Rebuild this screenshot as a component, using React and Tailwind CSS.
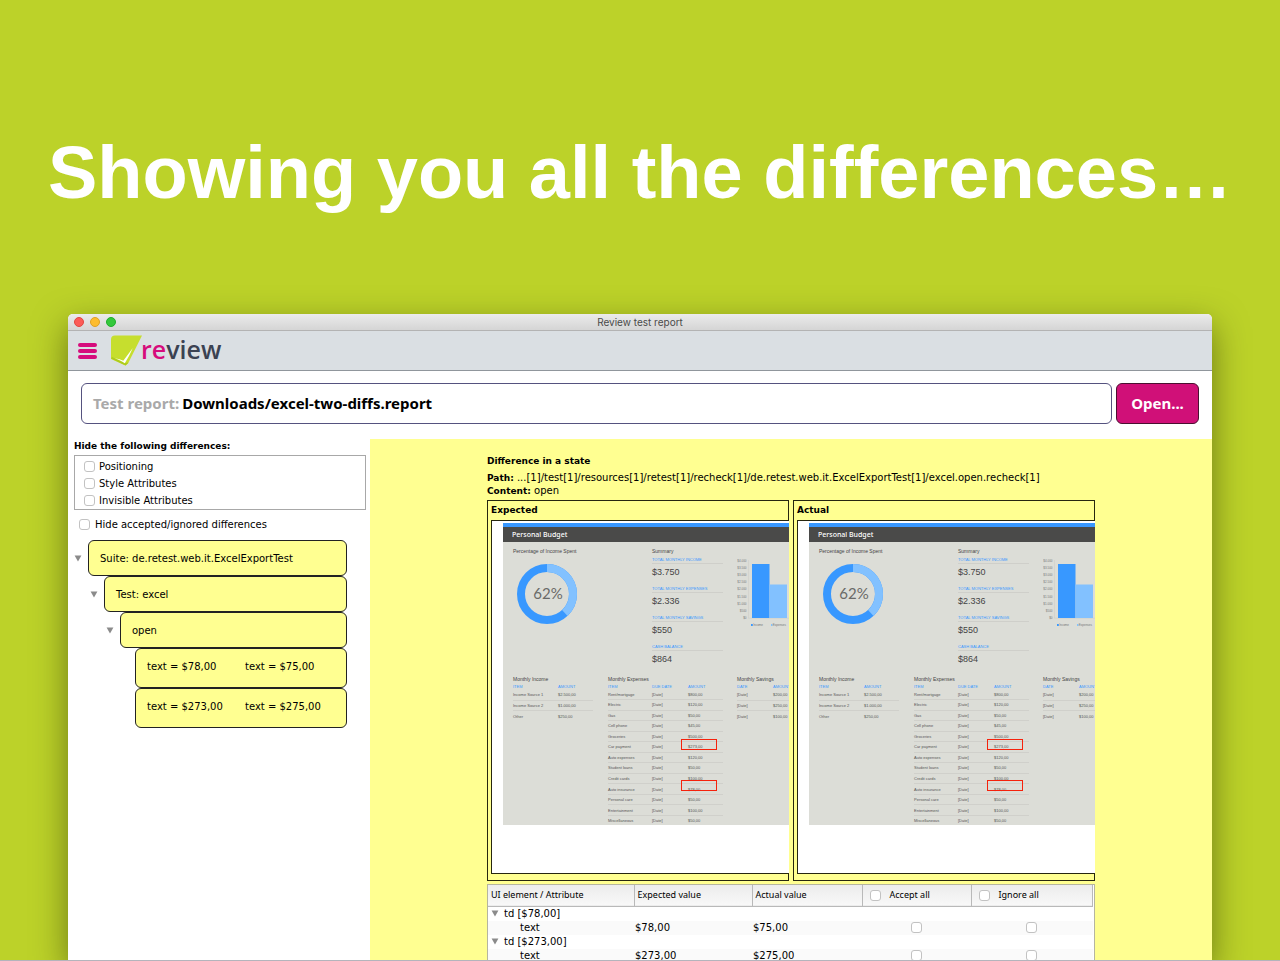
import React from 'react';

const UI = "font-['DejaVu_Sans',sans-serif]";

const expenses = [
  ['Rent/mortgage', '$800,00'],
  ['Electric', '$120,00'],
  ['Gas', '$50,00'],
  ['Cell phone', '$45,00'],
  ['Groceries', '$500,00'],
  ['Car payment', '$273,00'],
  ['Auto expenses', '$120,00'],
  ['Student loans', '$50,00'],
  ['Credit cards', '$100,00'],
  ['Auto insurance', '$78,00'],
  ['Personal care', '$50,00'],
  ['Entertainment', '$100,00'],
  ['Miscellaneous', '$50,00'],
];

const summary = [
  ['TOTAL MONTHLY INCOME', '$3.750'],
  ['TOTAL MONTHLY EXPENSES', '$2.336'],
  ['TOTAL MONTHLY SAVINGS', '$550'],
  ['CASH BALANCE', '$864'],
];

function CheckBox({ label, id }) {
  return (
    <input
      type="checkbox"
      id={id}
      aria-label={label}
      className="block size-[11px] shrink-0 appearance-none rounded-[3px] border border-[#c2c2c2] bg-white checked:bg-[#3b99fc]"
    />
  );
}

function Triangle() {
  return (
    <svg width="8" height="7" viewBox="0 0 8 7" className="shrink-0" aria-hidden="true">
      <path d="M0.6 0.5h6.8L4 6.6z" fill="#8b8b8b" />
    </svg>
  );
}

function Logo() {
  return (
    <span className="flex items-start" role="img" aria-label="review">
      <svg width="31" height="32" viewBox="0 0 31 32" aria-hidden="true">
        <path d="M4 0.500h27L17 28.500 14.500 30.500 0 24V4.500Q0 0.500 4 0.500z" fill="#c6de2e" />
        <path d="M0 23.500 14.500 30.500 17.500 27.500 14 28 1 22z" fill="#aecb1e" />
        <path d="M3.500 23.500c3.800 0.300 6.500 1 8.800 2.300L21.800 13c-2.500 5.500-5 10.500-8 15.200-3-2.200-6-3.700-10.300-4.700z" fill="#fff" />
      </svg>
      <span className="-ml-px font-['Open_Sans',sans-serif] text-[25px] leading-[28px] font-semibold text-[#3b4252]">
        <span className="text-[#d60c7c]">re</span>view
      </span>
    </span>
  );
}

function Donut() {
  return (
    <svg width="60" height="60" viewBox="0 0 60 60" aria-hidden="true">
      <circle cx="30" cy="30" r="26" fill="none" stroke="#3898ff" strokeWidth="8" />
      <circle cx="30" cy="30" r="26" fill="none" stroke="#82c1ff" strokeWidth="8" pathLength="100" strokeDasharray="38 62" transform="rotate(-90 30 30)" />
      <text x="31" y="34.500" textAnchor="middle" fontSize="15" fontFamily="Lato, sans-serif" fill="#6a6a68">62%</text>
    </svg>
  );
}

function BarChart() {
  const ticks = ['$4.000', '$3.500', '$3.000', '$2.500', '$2.000', '$1.500', '$1.000', '$500', '$0'];
  return (
    <svg width="52" height="72" viewBox="0 0 52 72" fontFamily="Liberation Sans, sans-serif" fontSize="3" aria-hidden="true">
      {ticks.map((t, i) => (
        <text key={t} x="9.500" y={4.500 + i * 7.200} textAnchor="end" fill="#777">{t}</text>
      ))}
      <path d="M11.500 3v58M11 61.200h41" stroke="#cfcfca" strokeWidth="0.600" />
      <rect x="15" y="7" width="17.500" height="54" fill="#3898ff" />
      <rect x="32.500" y="27.500" width="17.500" height="33.500" fill="#82c1ff" />
      <rect x="14" y="67" width="1.800" height="2" fill="#3898ff" />
      <text x="16.200" y="69" fill="#777">Income</text>
      <rect x="34" y="67" width="1.500" height="2" fill="#82c1ff" />
      <text x="35.800" y="69" fill="#777">Expenses</text>
    </svg>
  );
}

function MiniTable({ title, heads, rows, cols, tall }) {
  return (
    <div>
      <div className="h-[9px] font-['Liberation_Sans',sans-serif] text-[5px] leading-[9px] whitespace-nowrap text-[#444]">{title}</div>
      <table className={`table-fixed border-collapse font-['Liberation_Sans',sans-serif] text-[4px] leading-[5px] text-[#555] ${tall}`}>
        <thead className="text-[#3898ff]">
          <tr>
            {heads.map((h, i) => (
              <th key={h} className={`h-[6px] p-0 text-left align-top font-normal ${cols[i]}`}>{h}</th>
            ))}
          </tr>
        </thead>
        <tbody>
          {rows.map((r) => (
            <tr key={r.join()} className="border-b border-[#d0d0cb] last:border-0">
              {r.map((c, i) => (
                <td key={i} className="p-0 whitespace-nowrap">{c}</td>
              ))}
            </tr>
          ))}
        </tbody>
      </table>
    </div>
  );
}

function BudgetSheet() {
  return (
    <div className="relative ml-[11px] mt-[2px] overflow-hidden bg-[#dcddd7]">
      <div className="h-[4px] bg-[#3898ff]" />
      <div className="h-[15px] bg-[#4a4a49] pl-[9px] font-['Noto_Sans',sans-serif] text-[7px] leading-[15px] font-medium text-white">Personal Budget</div>
      <div className="flex pt-[5px] pl-[10px]">
        <div className="w-[139px] shrink-0">
          <div className="h-[9px] font-['Liberation_Sans',sans-serif] text-[5px] leading-[9px] text-[#444]">Percentage of Income Spent</div>
          <div className="pt-[8px] pl-[4px]"><Donut /></div>
        </div>
        <div className="w-[85px] shrink-0 pr-[14px]">
          <div className="h-[9px] font-['Liberation_Sans',sans-serif] text-[5px] leading-[9px] text-[#444]">Summary</div>
          {summary.map(([k, v]) => (
            <div key={k} className="h-[29px]">
              <div className="h-[8px] border-b border-[#cfcfca] font-['Liberation_Sans',sans-serif] text-[4px] leading-[7px] whitespace-nowrap text-[#3898ff]">{k}</div>
              <div className="font-['Liberation_Sans',sans-serif] text-[9px] leading-[17px] text-[#444]">{v}</div>
            </div>
          ))}
        </div>
        <div className="w-[52px] shrink-0 pt-[10px]"><BarChart /></div>
      </div>
      <div className="flex items-start pt-[3px] pl-[10px]">
        <div className="w-[95px] shrink-0">
          <MiniTable
            title="Monthly Income"
            heads={['ITEM', 'AMOUNT']}
            cols={['w-[45px]', 'w-[35px]']}
            tall="h-[37px]"
            rows={[['Income Source 1', '$2.500,00'], ['Income Source 2', '$1.000,00'], ['Other', '$250,00']]}
          />
        </div>
        <div className="w-[129px] shrink-0">
          <MiniTable
            title="Monthly Expenses"
            heads={['ITEM', 'DUE DATE', 'AMOUNT']}
            cols={['w-[44px]', 'w-[36px]', 'w-[35px]']}
            tall="h-[141px]"
            rows={expenses.map(([n, a]) => [n, '[Date]', a])}
          />
        </div>
        <div className="w-[80px] shrink-0">
          <MiniTable
            title="Monthly Savings"
            heads={['DATE', 'AMOUNT']}
            cols={['w-[36px]', 'w-[35px]']}
            tall="h-[37px]"
            rows={[['[Date]', '$200,00'], ['[Date]', '$250,00'], ['[Date]', '$100,00']]}
          />
        </div>
      </div>
      <div className="absolute top-[216px] left-[178px] h-[11px] w-[36px] border border-[#f5220c]" />
      <div className="absolute top-[257px] left-[178px] h-[11px] w-[36px] border border-[#f5220c]" />
    </div>
  );
}

function Shot({ title }) {
  return (
    <section className="min-w-0 border-y border-l border-[#26260f] pl-[3px]">
      <h3 className="h-[19px] border-r border-[#26260f] text-[9px] leading-[18px] font-bold">{title}</h3>
      <div className="h-[354px] overflow-hidden border-y border-l border-[#26260f] bg-white"><BudgetSheet /></div>
      <div className="h-[6px] border-r border-[#26260f]" />
    </section>
  );
}

function TreeNode({ indent, children, leaf }) {
  return (
    <li className={`flex items-center ${indent}`}>
      {!leaf && <button type="button" aria-label="Collapse" className="mr-[6px] block"><Triangle /></button>}
      <div className={`flex flex-1 items-center rounded-[6px] border border-[#222] bg-[#ffff91] pl-[11px] text-[10px] whitespace-nowrap ${leaf ? 'h-[40px] pb-[4px]' : 'h-[36px]'}`}>{children}</div>
    </li>
  );
}

function DiffTable() {
  const groups = [
    ['td [$78,00]', '$78,00', '$75,00'],
    ['td [$273,00]', '$273,00', '$275,00'],
  ];
  const head = 'border-r border-[#b9b9b9] p-0 pl-[3px] text-left font-normal';
  return (
    <div className="mt-[3px] overflow-hidden border border-[#b5b5a0] bg-white pr-px">
      <table className="w-full table-fixed border-collapse text-[10px] leading-[14px]">
        <thead>
          <tr className="h-[21px] border-b border-[#b9b9b9] bg-gradient-to-b from-[#ececec] to-[#f8f8f8] font-['Noto_Sans',sans-serif] text-[9px]">
            <th className={`w-[146px] ${head}`}>UI element / Attribute</th>
            <th className={`w-[118px] ${head}`}>Expected value</th>
            <th className={`w-[110px] ${head}`}>Actual value</th>
            <th className={`w-[109px] ${head}`}><label className="flex items-center gap-[9px] pl-[4px]"><CheckBox label="Accept all" />Accept all</label></th>
            <th className={head}><label className="flex items-center gap-[9px] pl-[4px]"><CheckBox label="Ignore all" />Ignore all</label></th>
          </tr>
        </thead>
        <tbody>
          {groups.map(([name, a, b]) => (
            <React.Fragment key={name}>
              <tr className="h-[14px]">
                <td colSpan="5" className="p-0 pl-[3px]">
                  <span className="flex items-center gap-[5px]"><Triangle />{name}</span>
                </td>
              </tr>
              <tr className="h-[14px] bg-[#fafafa]">
                <td className="p-0 pl-[32px]">text</td>
                <td className="p-0 pl-px">{a}</td>
                <td className="p-0 pl-px">{b}</td>
                <td className="p-0"><span className="flex justify-center"><CheckBox label={`Accept ${name}`} /></span></td>
                <td className="p-0"><span className="flex justify-center"><CheckBox label={`Ignore ${name}`} /></span></td>
              </tr>
            </React.Fragment>
          ))}
        </tbody>
      </table>
    </div>
  );
}

export default function App() {
  return (
    <div className={`flex h-screen flex-col overflow-hidden border-b border-[#b4b4bc] bg-[#bcd229] text-black ${UI}`}>
      <h1 className="shrink-0 pt-[128px] pb-[96px] text-center font-['Liberation_Sans',sans-serif] text-[74px] leading-[90px] font-bold whitespace-nowrap text-white">
        Showing you all the differences…
      </h1>
      <main className="mx-[68px] flex min-h-0 flex-1 flex-col rounded-t-[5px] bg-white shadow-[0_12px_34px_rgba(40,45,0,0.55)]">
        <div className="grid h-[17px] shrink-0 grid-cols-[1fr_auto_1fr] items-center rounded-t-[5px] border-b border-[#b3b3b3] bg-gradient-to-b from-[#ebebeb] to-[#d5d5d5] px-[6px]">
          <div className="flex gap-[6px]">
            <button type="button" aria-label="Close" className="size-[10px] rounded-full border border-[#e2463f] bg-[#fc5b57]" />
            <button type="button" aria-label="Minimize" className="size-[10px] rounded-full border border-[#dfa023] bg-[#fdbc2e]" />
            <button type="button" aria-label="Zoom" className="size-[10px] rounded-full border border-[#1fae2b] bg-[#34c83b]" />
          </div>
          <div className="font-['Inter',sans-serif] text-[10px] leading-[16px] text-[#4a4a4a]">Review test report</div>
        </div>
        <header className="flex h-[40px] shrink-0 items-start border-b border-[#90969c] bg-[#dadfe3] pl-[10px]">
          <button type="button" aria-label="Menu" className="mt-[12px] mr-[14px] flex w-[19px] flex-col gap-[2px]">
            <span className="h-[4px] rounded-full bg-[#d60c7c]" />
            <span className="h-[4px] rounded-full bg-[#d60c7c]" />
            <span className="h-[4px] rounded-full bg-[#d60c7c]" />
          </button>
          <div className="pt-[4px]"><Logo /></div>
        </header>
        <div className="flex shrink-0 gap-[4px] px-[13px] pt-[12px] pb-[15px] font-['Noto_Sans',sans-serif] text-[15px] font-bold">
          <label className="flex h-[41px] flex-1 items-center gap-[3px] rounded-[6px] border border-[#55527f] bg-white pl-[11px]">
            <span className="text-[#a9a9a9]">Test report:</span>
            <input type="text" defaultValue="Downloads/excel-two-diffs.report" className="min-w-0 flex-1 bg-transparent outline-none" />
          </label>
          <button type="button" className="h-[41px] w-[83px] rounded-[6px] border border-[#4a1030] bg-[#d01078] text-white">Open...</button>
        </div>
        <div className="flex min-h-0 flex-1">
          <aside className="w-[302px] shrink-0 pr-[4px] pl-[6px]">
            <fieldset>
              <legend className="h-[16px] text-[9px] leading-[14px] font-bold">Hide the following differences:</legend>
              <div className="h-[55px] border border-[#a8a8a8] pt-[2px] pl-[9px] text-[10px] leading-[17px]">
                {['Positioning', 'Style Attributes', 'Invisible Attributes'].map((t) => (
                  <label key={t} className="flex items-center gap-[4px]"><CheckBox />{t}</label>
                ))}
              </div>
            </fieldset>
            <label className="mb-[2px] flex h-[28px] items-center gap-[5px] pl-[5px] text-[10px]"><CheckBox />Hide accepted/ignored differences</label>
            <ul className="pr-[19px]">
              <TreeNode indent="pl-0">Suite: de.retest.web.it.ExcelExportTest</TreeNode>
              <TreeNode indent="pl-[16px]">Test: excel</TreeNode>
              <TreeNode indent="pl-[32px]">open</TreeNode>
              <TreeNode indent="pl-[61px]" leaf><span className="w-[98px]">text = $78,00</span><span>text = $75,00</span></TreeNode>
              <TreeNode indent="pl-[61px]" leaf><span className="w-[98px]">text = $273,00</span><span>text = $275,00</span></TreeNode>
            </ul>
          </aside>
          <section className="min-w-0 flex-1 overflow-hidden bg-[#ffff91] pt-[15px] pr-[117px] pl-[117px] text-[10px]">
            <h2 className="mb-[3px] text-[9px] leading-[14px] font-bold">Difference in a state</h2>
            <p className="leading-[13px] whitespace-nowrap"><b className="text-[9px] leading-[9px]">Path:</b> ...[1]/test[1]/resources[1]/retest[1]/recheck[1]/de.retest.web.it.ExcelExportTest[1]/excel.open.recheck[1]</p>
            <p className="mb-[3px] leading-[13px]"><b className="text-[9px] leading-[9px]">Content:</b> open</p>
            <div className="grid grid-cols-2 gap-[4px]">
              <Shot title="Expected" />
              <Shot title="Actual" />
            </div>
            <DiffTable />
          </section>
        </div>
      </main>
    </div>
  );
}
